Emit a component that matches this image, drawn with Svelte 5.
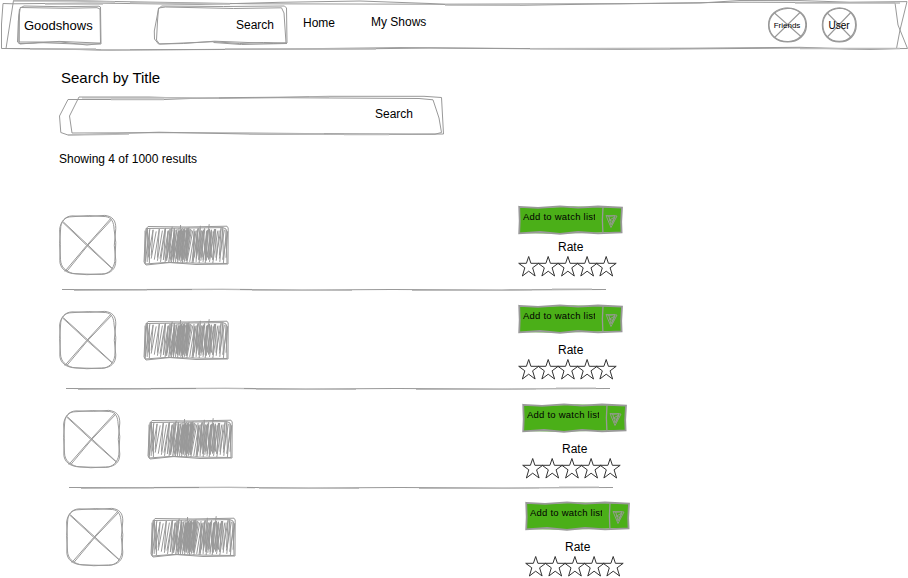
<script>
  const rows = [
    { shift: 0, height: 99, kind: 'first', rule: 3 },
    { shift: 0, height: 99, kind: '', rule: 7 },
    { shift: 4, height: 98, kind: '', rule: 6 },
    { shift: 7, height: 77, kind: '', rule: null }
  ];
  const stars = [0, 19.5, 39.2, 58.4, 77.5];

  // Pen strokes of the scribbled title: [start x, end x, spacing, lean]
  const bands = [
    [2, 18, 3.1, 5],
    [2, 8, 2.2, 0],
    [17, 80, 3.3, 5],
    [22, 44, 2.1, 3],
    [23, 45, 2.6, 6],
    [33, 44, 1.6, 3],
    [49, 67, 2.2, 4],
    [50, 67, 3.1, 1],
    [66, 81, 3.6, 3]
  ];
  let scribble = '';
  bands.forEach(([a, b, step, lean], k) => {
    let i = 0;
    for (let x = a; x < b; x += step) {
      const top = 3.2 + ((i * 7 + k * 3) % 5) * 0.8 - ((k === 3 || k === 6) && i % 4 === 2 ? 4 : 0);
      const bottom = 38 - ((i * 5 + k * 2) % 6) * 1.1;
      scribble += `M${x.toFixed(1)} ${bottom.toFixed(1)}L${(x + lean).toFixed(1)} ${top.toFixed(1)}`;
      if (i % 2) scribble += `L${(x + step).toFixed(1)} ${(bottom - 2).toFixed(1)}`;
      i++;
    }
  });
</script>

<div class="page">
  <header>
    <svg class="frame" width="908" height="52" viewBox="0 0 908 52">
      <path d="M13.5 .5H70L115 1.5L250 3.8L430 4.2L620 3.7L740 2.2L895 2.8L898 25L907.5 48.5L850 49L800 48L620 49.5L430 48L350 49L100 50L40 48.5H1.5V24L3 3.5L13 3.8L90 3L200 4.5L280 2.3L360 1L430 3.5L450 4.8L520 5.3L600 4L700 3L740 .5L800 .6L850 2.2L907 1.6L900 30L896.5 48.5L870 49.5L800 47.3L690 48.2L520 48.5L400 47.6L280 49L110 50L6 48.5L13.5 .5" />
      <path class="soft" d="M14 1H75L115 2M45 4H103M130 2.8L230 4M445 5H520M30 49H96M101 49.6H130M225 49H376M530 48.8H670M795 3H900M800 48.5H900" />
    </svg>
    <div class="brand">
      <svg class="frame" width="86" height="41" viewBox="0 0 86 41">
        <path d="M4 3L8 1L45 1.7L83 1.2L84.5 2L85 39L60 39L22 37.5L4 39L1.5 37L2.3 16L4.3 2.5L50 3.3L81 2.7L84 4L84.5 38L82 38L43 36.4L18 38.2L3 38.5L3.5 4L2.7 12L3 37L45 37L71 40L84.5 38.5" />
      </svg>
      <span>Goodshows</span>
    </div>
    <div class="mini">
      <svg class="frame" width="136" height="41" viewBox="-0.5 0 136 41">
        <path d="M5 4L8 1L70 1.5L131 1L133 3L133.5 38L110 37.5L86 38.5L60 36.7L6 39L3 35L4 16L5 3L12 2L80 3.5L128 2.8L130.5 8L132.5 38L120 38.5L61 36.2L30 38.5L5 39L1 34L.8 26L5 4M60 37.5L88 39.5L133.5 38.5" />
      </svg>
      <span>Search</span>
    </div>
    <nav>
      <span class="home">Home</span>
      <span class="shows">My Shows</span>
    </nav>
    <div class="round friends">
      <svg class="frame" width="40" height="36" viewBox="-0.5 0 40 36">
        <path d="M20 1C31 1 39 8 39 18C39 28 31 35 20 35C9 35 1 28 1 18C1 8 9 1 20 1ZM7 6L34 30M33 5L7 30.5" />
        <path d="M17 1.4C29 0 38.5 8 38.3 18C38 28 29 34.6 21 34.5C10 35 1.8 28 1.6 19C1 9 9 2 20 1.5" />
      </svg>
      <span>Friends</span>
    </div>
    <div class="round user">
      <svg class="frame" width="36" height="36" viewBox="-0.3 0 36 36">
        <path d="M18 1C28 1 35 8 35 18C35 28 28 35 18 35C8 35 1 28 1 18C1 8 8 1 18 1ZM6 6L30 30.5M30 5L6 30" />
        <path d="M16 1.4C27 .5 34.4 8 34.3 18C34 28 27 34.5 18 34.4C8 34.5 1.5 27 1.6 18C1.5 9 7 2 19 1.3" />
      </svg>
      <span>User</span>
    </div>
  </header>

  <main>
    <h1>Search by Title</h1>
    <div class="search">
      <svg class="frame" width="387" height="42" viewBox="0 0 387 42">
        <path d="M9 4.5H105L150 2.8L220 2.2L270 1.3H365L382.5 2.5L384.5 39L350 39.2L290 39L210 39.5L100 37.2L9 40L1.8 37.5L.5 21L9 4.5M20 2H90L140 3.5L220 2.7L360 3.5L374 4.8L380 23L382.5 37.5L376 39.2L300 39L190 38L100 37.7L13 38L10.5 21L20 2" />
        <path class="soft" d="M23 2.8H116L160 3M52 4.5H105M250 2.2H270M190 39H265M9 40L70 39M285 39.5H330" />
      </svg>
      <span>Search</span>
    </div>
    <p class="count">Showing 4 of 1000 results</p>

    <section class="results">
      {#each rows as row}
        <article class={row.kind} style="margin-left:{row.shift}px;height:{row.height}px">
          <div class="content">
            <svg class="picture" width="58" height={row.kind ? 61 : 59} viewBox="0.2 0.6 58 61" preserveAspectRatio="none">
              <path d="M13 1.5L31 2L46 1C54 2 57 6 57 14L55.5 31L57 46C57 55 52 59 43 60L17 59.5C7 59 1 54 1 46L1.5 30L.8 15C2 7 6 2 13 1.5Z" />
              <path d="M11 2.5L30 1.2L47 2.2C53 3 55 8 55.3 15L57 28L56 47C55 54 50 60 43 59.5L28 60.3L14 59C7 57 2 53 1.7 45L.8 29L2 12C3 7 6 3 11 2.5M4 8L28 31L53 54M4.5 7.5L29 30.5L54 54.5M52 4L28 31L6 57M53 5L29 31L8 57" />
            </svg>
            <svg class="title" width="86" height="42" viewBox="0 0 86 42">
              <path d={scribble} />
              <path d="M3 4L5 1.5L43 2L84 1.2L85.2 3L85 39L53 39.5L27 37.5L3 40L1 37L2 16L3 3.5L80 2.6L83 4L84 38.5L60 38.2L22 37.5L2 39L2.5 17L4 3" />
            </svg>
            <div class="controls">
              <button>
                <svg class="frame" width="106" height="32" viewBox="0 0 106 32">
                  <path class="fill" d="M1 2L30 2.5L55 1.5L104 2.5L104 27L70 28L30 28.5L1 28Z" />
                  <path class="edge" d="M1.2 1.8L20 2.8L42 1.4L60 2.7L80 1.5L104 2.7L103.2 17L103.6 27.5L80 28.4L60 27L42 28.9L22 27L1.2 28.3L1.7 16Z" />
                  <path class="edge thin" d="M85 2L84.4 15L84.9 28" />
                  <path class="arrow" d="M88 10.5L99 11L93 22.5ZM89.5 11.5L97 10.5L93 20L91 12M95.5 17L91.5 15L97 12L94 19" />
                </svg>
                <span>Add to watch list</span>
              </button>
              <span class="rate">Rate</span>
              <svg class="stars" width="100" height="23" viewBox="0.3 0 100 23">
                {#each stars as x}
                  <path d="M11 1.5L13.2 8.3H21L14.9 12.8L17.4 21L11 16.2L4.7 21L7.1 12.8L1 8.3H8.7Z" transform="translate({x})" />
                {/each}
              </svg>
            </div>
          </div>
          {#if row.rule !== null}
            <svg class="rule" width="545" height="4" viewBox="0 0 545 4" style="margin-left:{row.rule}px">
              <path d="M0 1.5L75 1.7L160 1.3L240 2L330 1.5L440 2L544 1.5" />
              <path class="soft" d="M12 2.3L85 2M130 1.5H178M190 2.2L290 2.5M350 2.5H433L470 2M490 1.2H530" />
            </svg>
          {/if}
        </article>
      {/each}
    </section>
  </main>
</div>

<style>
  :global(body) { margin: 0; background: #fff; }
  .page {
    width: 908px;
    height: 578px;
    overflow: hidden;
    background: #fff;
    color: #000;
    font: 12px/14px "Liberation Sans", Arial, sans-serif;
  }
  svg { display: block; flex: none; }
  path { fill: none; stroke: #999; stroke-width: 1; }
  .soft { stroke: #bbb; stroke-width: 1.4; }
  .frame { position: absolute; left: 0; top: 0; }
  span { position: relative; white-space: nowrap; }

  header { position: relative; display: flex; height: 52px; box-sizing: border-box; padding-left: 16px; }
  .brand { position: relative; width: 86px; height: 41px; margin-top: 5px; padding: 13px 0 0 8px; box-sizing: border-box; font-size: 13px; line-height: 15px; }
  .mini { position: relative; width: 136px; height: 41px; margin: 5px 0 0 51px; padding: 13px 15px 0 0; box-sizing: border-box; text-align: right; }
  nav { display: flex; width: 464px; padding-left: 14px; }
  .home { margin-top: 16px; width: 68px; }
  .shows { margin-top: 15px; }
  .round { position: relative; display: flex; align-items: center; justify-content: center; height: 36px; margin-top: 7px; padding-top: 2px; box-sizing: border-box; }
  .round path { stroke-width: 1.1; }
  .friends { width: 40px; font-size: 8px; }
  .user { width: 36px; margin-left: 14px; font-size: 10px; }

  main { padding-left: 59px; }
  h1 { margin: 0; padding: 17px 0 0 2px; font-size: 15px; line-height: 18px; font-weight: 400; }
  .search { position: relative; width: 387px; height: 42px; margin-top: 8px; padding: 12px 33px 0 0; box-sizing: border-box; text-align: right; }
  .search + .count { margin: 15px 0 0; }
  .results { padding-top: 39px; }
  article { display: flex; flex-direction: column; }
  .content { display: flex; height: 83px; flex: none; }
  .picture { margin-top: 7px; overflow: visible; }
  .title { margin: 16px 0 0 26px; overflow: visible; }
  .controls { margin-left: 289px; width: 106px; display: flex; flex-direction: column; }
  button { position: relative; display: block; width: 106px; height: 30px; flex: none; padding: 6px 0 12px 5px; border: 0; background: none; color: #000; font: 9.5px/12px "Liberation Sans", Arial, sans-serif; letter-spacing: 0.23px; text-align: left; }
  button span { display: block; width: 72px; overflow: hidden; }
  .fill { fill: #4baf18; stroke: none; }
  .edge { stroke: #999; stroke-width: 1.8; }
  .thin { stroke-width: 1.3; }
  .arrow { stroke: #929b8c; stroke-width: 1; }
  .rate { margin: 9px 0 0 40px; }
  .stars { margin-top: 1px; }
  .stars path { stroke: #333; }
  .first .picture { margin-top: 10px; }
  .first .title { margin-top: 20px; }
  .first .rate { margin-top: 5px; }
  .rule path { stroke-width: 1.2; }
</style>
